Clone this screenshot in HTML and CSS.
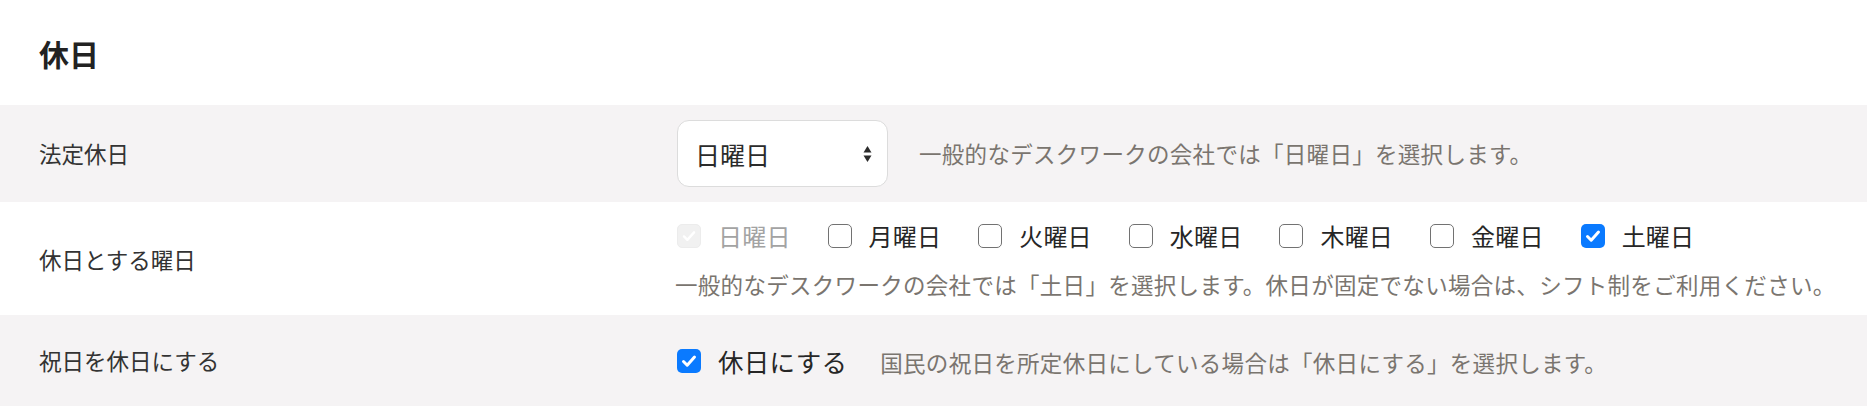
FILE: index.html
```html
<!DOCTYPE html>
<html lang="ja">
<head>
<meta charset="utf-8">
<title>休日</title>
<link rel="stylesheet" href="styles.css">
</head>
<body>
<section class="panel">
  <header class="panel-head">
    <h2 class="panel-title">休日</h2>
  </header>

  <div class="row row-gray row-legal">
    <div class="row-label">法定休日</div>
    <div class="row-control inline">
      <div class="select-wrap">
        <select class="select">
          <option>日曜日</option>
          <option>月曜日</option>
          <option>火曜日</option>
          <option>水曜日</option>
          <option>木曜日</option>
          <option>金曜日</option>
          <option>土曜日</option>
        </select>
        <svg class="select-arrows" width="9" height="18" viewBox="0 0 9 18" aria-hidden="true">
          <polygon points="0.5,7.5 4.5,1 8.5,7.5" fill="#2b2b2b"/>
          <polygon points="0.5,10.5 8.5,10.5 4.5,17" fill="#2b2b2b"/>
        </svg>
      </div>
      <span class="hint hint-inline">一般的なデスクワークの会社では「日曜日」を選択します。</span>
    </div>
  </div>

  <div class="row row-white row-days">
    <div class="row-label">休日とする曜日</div>
    <div class="row-control">
      <div class="checks">
        <span class="check is-disabled">
          <span class="box box-disabled"><svg width="24" height="24" viewBox="0 0 24 24"><polyline points="6.5,12.5 10.2,16.2 17.5,8" fill="none" stroke="#ffffff" stroke-width="2.6" stroke-linecap="round" stroke-linejoin="round"/></svg></span>
          <span class="check-label">日曜日</span>
        </span>
        <span class="check">
          <span class="box"></span>
          <span class="check-label">月曜日</span>
        </span>
        <span class="check">
          <span class="box"></span>
          <span class="check-label">火曜日</span>
        </span>
        <span class="check">
          <span class="box"></span>
          <span class="check-label">水曜日</span>
        </span>
        <span class="check">
          <span class="box"></span>
          <span class="check-label">木曜日</span>
        </span>
        <span class="check">
          <span class="box"></span>
          <span class="check-label">金曜日</span>
        </span>
        <span class="check">
          <span class="box box-checked"><svg width="24" height="24" viewBox="0 0 24 24"><polyline points="6.5,12.5 10.2,16.2 17.5,8" fill="none" stroke="#ffffff" stroke-width="3" stroke-linecap="round" stroke-linejoin="round"/></svg></span>
          <span class="check-label">土曜日</span>
        </span>
      </div>
      <p class="hint hint-block">一般的なデスクワークの会社では「土日」を選択します。休日が固定でない場合は、シフト制をご利用ください。</p>
    </div>
  </div>

  <div class="row row-gray row-holiday">
    <div class="row-label">祝日を休日にする</div>
    <div class="row-control inline">
      <span class="check">
        <span class="box box-checked"><svg width="24" height="24" viewBox="0 0 24 24"><polyline points="6.5,12.5 10.2,16.2 17.5,8" fill="none" stroke="#ffffff" stroke-width="3" stroke-linecap="round" stroke-linejoin="round"/></svg></span>
        <span class="check-label check-label-wide">休日にする</span>
      </span>
      <span class="hint hint-inline hint-after-check">国民の祝日を所定休日にしている場合は「休日にする」を選択します。</span>
    </div>
  </div>
</section>
</body>
</html>
```

FILE: styles.css
```css
html, body {
  margin: 0;
  padding: 0;
  background: #ffffff;
}

body {
  font-family: "Noto Sans CJK JP", "Noto Sans", sans-serif;
  color: #333333;
  font-size: 22.5px;
}

.panel {
  display: flex;
  flex-direction: column;
}

.panel-head {
  height: 105px;
  display: flex;
  align-items: center;
  padding: 0 39px;
  box-sizing: border-box;
}

.panel-title {
  margin: 0;
  font-size: 30px;
  font-weight: 700;
  color: #222222;
  line-height: 1.2;
}

.row {
  display: grid;
  grid-template-columns: 638px 1fr;
  align-items: center;
  padding: 0 20px 0 39px;
  box-sizing: border-box;
}

.row-gray {
  background: #f5f3f4;
}

.row-white {
  background: #ffffff;
}

.row-legal {
  height: 97px;
}

.row-days {
  height: 113px;
  padding-top: 15px;
  padding-bottom: 13px;
}

.row-holiday {
  height: 92px;
}

.row-label {
  font-size: 22.5px;
  color: #333333;
  line-height: 1.5;
}

.row-control {
  display: flex;
  flex-direction: column;
  min-width: 0;
}

.row-control.inline {
  flex-direction: row;
  align-items: center;
}

.select-wrap {
  position: relative;
  width: 211px;
  height: 67px;
}

.select {
  -webkit-appearance: none;
  appearance: none;
  width: 100%;
  height: 100%;
  box-sizing: border-box;
  border: 1.5px solid #dcdcdc;
  border-radius: 12px;
  background: #ffffff;
  padding: 0 40px 0 17px;
  font-family: "Noto Sans CJK JP", "Noto Sans", sans-serif;
  font-size: 25px;
  color: #2b2b2b;
  outline: none;
}

.select-arrows {
  position: absolute;
  right: 16px;
  top: 50%;
  margin-top: -9px;
  pointer-events: none;
}

.hint {
  color: #7a756f;
  font-size: 22.5px;
  line-height: 1.5;
  letter-spacing: 0.3px;
  white-space: nowrap;
  margin: 0;
}

.hint-inline {
  margin-left: 31px;
}

.hint-after-check {
  margin-left: 33px;
  margin-top: 4px;
}

.hint-block {
  margin-top: 14px;
  margin-left: -2px;
}

.checks {
  display: flex;
  align-items: center;
  height: 36px;
}

.check {
  display: inline-flex;
  align-items: center;
  gap: 17px;
  margin-right: 37px;
}

.row-holiday .check {
  margin-right: 0;
}

.box {
  width: 24px;
  height: 24px;
  box-sizing: border-box;
  border: 1.5px solid #727272;
  border-radius: 5px;
  background: #ffffff;
  display: inline-flex;
  align-items: center;
  justify-content: center;
  flex: none;
}

.box svg {
  display: block;
}

.box-checked {
  border: none;
  background: #0a7aff;
}

.box-disabled {
  border: 1px solid #ececec;
  background: #f1f1f1;
}

.check-label {
  font-size: 24px;
  color: #262626;
  line-height: 1.5;
  letter-spacing: 0.2px;
}

.check-label-wide {
  font-size: 25.5px;
  letter-spacing: 0.3px;
}

.is-disabled .check-label {
  color: #a3a3a3;
}
```
